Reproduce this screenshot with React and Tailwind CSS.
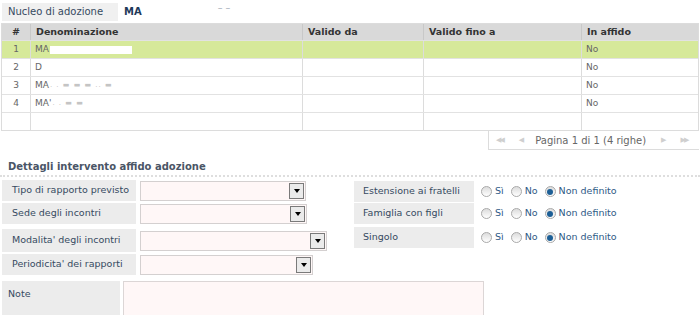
import React from "react";

const font = { fontFamily: '"DejaVu Sans", Verdana, sans-serif' };

const rows = [
  { n: 1, name: "MA", redact: "box", affido: "No", active: true },
  { n: 2, name: "D", affido: "No" },
  { n: 3, name: "MA", redact: "dots", affido: "No" },
  { n: 4, name: "MA'", redact: "short", affido: "No" },
  { n: "", name: "", affido: "" },
];

function Select({ width }) {
  return (
    <div
      className="h-[20px] bg-[#fff7f7] border border-[#d4d0d0] flex justify-end items-center pr-[1px]"
      style={{ width }}
    >
      <div className="w-[15px] h-[16px] bg-[#ebebeb] border border-[#7a7a7a] flex items-center justify-center">
        <span className="block w-0 h-0 border-l-[3px] border-r-[3px] border-t-[4px] border-l-transparent border-r-transparent border-t-black" />
      </div>
    </div>
  );
}

function Radio({ checked, label, gap }) {
  return (
    <label className="flex items-center gap-[3px]" style={{ marginRight: gap }}>
      <span className="w-[11px] h-[11px] rounded-full border border-[#a9a9a9] bg-gradient-to-b from-[#dcdcdc] to-white flex items-center justify-center">
        {checked && <span className="w-[6px] h-[6px] rounded-full bg-[#1d5f96]" />}
      </span>
      <span className="text-[#2f5a86]">{label}</span>
    </label>
  );
}

function LeftRow({ label, width, h = 21 }) {
  return (
    <div className="flex items-center gap-[4px]">
      <div
        className="w-[134px] bg-[#ececec] flex items-center pl-[10px] text-[#364a61]"
        style={{ height: h }}
      >
        {label}
      </div>
      <Select width={width} />
    </div>
  );
}

function RightRow({ label }) {
  return (
    <div className="flex items-center gap-[7px]">
      <div className="w-[120px] h-[21px] bg-[#ececec] flex items-center pl-[9px] text-[#364a61]">
        {label}
      </div>
      <div className="flex items-center text-[9.5px]">
        <Radio label="Sì" gap={7} />
        <Radio label="No" gap={7} />
        <Radio label="Non definito" checked gap={0} />
      </div>
    </div>
  );
}

export default function App() {
  return (
    <div className="w-[700px] h-[315px] bg-white text-[9.5px] overflow-hidden" style={font}>
      {/* Nucleo */}
      <div className="flex items-center pt-[2px] pl-[2px] h-[21px]">
        <div className="w-[116px] h-[18px] bg-[#f0f0f0] flex items-center pl-[6px] text-[#364a61] text-[10px]">
          Nucleo di adozione
        </div>
        <span className="ml-[6px] font-bold text-[#1f3a5a] text-[10px]">MA</span>
        <span className="ml-[76px] text-[#9aa4b0] -mt-[6px]">– –</span>
      </div>

      {/* Table */}
      <div className="mt-[2px] mx-[1px] border border-[#dcdcdc]">
        <div className="flex h-[16px] bg-[#d9d9d9] font-bold text-[#333] items-center">
          <div className="w-[28px] text-center">#</div>
          <div className="w-[272px] pl-[5px] border-l border-[#c8c8c8] h-full flex items-center">Denominazione</div>
          <div className="w-[121px] pl-[5px] border-l border-[#c8c8c8] h-full flex items-center">Valido da</div>
          <div className="w-[158px] pl-[5px] border-l border-[#c8c8c8] h-full flex items-center">Valido fino a</div>
          <div className="flex-1 pl-[5px] border-l border-[#c8c8c8] h-full flex items-center">In affido</div>
        </div>
        {rows.map((r, i) => (
          <div
            key={i}
            className={`flex h-[18px] items-center text-[9px] text-[#666] border-t border-[#e2e2e2] ${r.active ? "bg-[#d6e99a]" : "bg-white"}`}
          >
            <div className="w-[28px] text-center">{r.n}</div>
            <div className="w-[272px] pl-[4px] border-l border-[#dcdcdc] h-full flex items-center">
              {r.name}
              {r.redact === "box" && <span className="ml-[1px] w-[82px] h-[8px] bg-white" />}
              {r.redact === "dots" && <span className="ml-[1px] text-[#c4c4c4] text-[7px] tracking-[1px]">. . ▬ ▬ ▬ .. ▬</span>}
              {r.redact === "short" && <span className="ml-[1px] text-[#c4c4c4] text-[7px] tracking-[1px]">. . ▬ ▬</span>}
            </div>
            <div className="w-[121px] border-l border-[#dcdcdc] h-full" />
            <div className="w-[158px] border-l border-[#dcdcdc] h-full" />
            <div className="flex-1 pl-[4px] border-l border-[#dcdcdc] h-full flex items-center">{r.affido}</div>
          </div>
        ))}
      </div>

      {/* Pager */}
      <div className="flex justify-end pr-[1px]">
        <div className="w-[211px] h-[19px] border-l border-b border-[#dcdcdc] flex items-center text-[#666] text-[10px]">
          <span className="ml-[7px] text-[#cfcfcf] text-[7px] tracking-[-2px]">◀◀</span>
          <span className="ml-[16px] text-[#cfcfcf] text-[7px]">◀</span>
          <span className="ml-[11px]">Pagina 1 di 1 (4 righe)</span>
          <span className="ml-[15px] text-[#cfcfcf] text-[7px]">▶</span>
          <span className="ml-[14px] text-[#cfcfcf] text-[7px] tracking-[-2px]">▶▶</span>
        </div>
      </div>

      {/* Dettagli */}
      <div className="mt-[10px] pl-[8px] font-bold text-[10px] text-[#4a5566] leading-[14px]">
        Dettagli intervento affido adozione
      </div>
      <div className="mt-[1px] border-b-2 border-dotted border-[#dedede]" />

      <div className="flex mt-[3px] pl-[2px]">
        <div className="flex flex-col gap-[2px] w-[352px]">
          <LeftRow label="Tipo di rapporto previsto" width={166} />
          <LeftRow label="Sede degli incontri" width={167} />
          <div className="h-[1px]" />
          <LeftRow label="Modalita' degli incontri" width={187} h={23} />
          <LeftRow label="Periodicita' dei rapporti" width={173} />
        </div>
        <div className="flex flex-col gap-[1px] pt-[1px]">
          <RightRow label="Estensione ai fratelli" />
          <RightRow label="Famiglia con figli" />
          <div className="h-[1px]" />
          <RightRow label="Singolo" />
        </div>
      </div>

      {/* Note */}
      <div className="flex mt-[6px] pl-[2px] gap-[3px]">
        <div className="w-[118px] h-[40px] bg-[#ececec] pl-[6px] pt-[6px] text-[#364a61]">Note</div>
        <div className="w-[361px] h-[40px] bg-[#fff7f7] border border-[#dcd6d6]" />
      </div>
    </div>
  );
}
